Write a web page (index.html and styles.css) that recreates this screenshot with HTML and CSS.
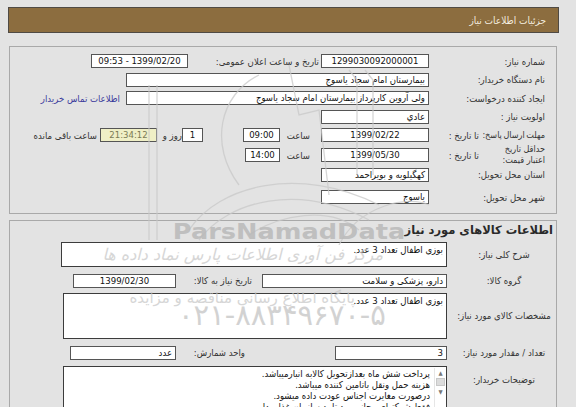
FILE: index.html
```html
<!DOCTYPE html>
<html lang="fa">
<head>
<meta charset="utf-8">
<title>جزئیات اطلاعات نیاز</title>
<link rel="stylesheet" href="styles.css">
</head>
<body>
<div class="page" dir="rtl">
  <div class="header">جزئیات اطلاعات نیاز</div>

  <div class="panel p1">
    <div class="row">
      <div class="lbl">شماره نیاز:</div>
      <div class="box w108 c">1299030092000001</div>
      <div class="txt w133">تاریخ و ساعت اعلان عمومی:</div>
      <div class="box w97 c">1399/02/20 - 09:53</div>
    </div>
    <div class="row">
      <div class="lbl">نام دستگاه خریدار:</div>
      <div class="box w303">بیمارستان امام سجاد یاسوج</div>
    </div>
    <div class="row">
      <div class="lbl">ایجاد کننده درخواست:</div>
      <div class="box w303">ولی آروین کارپرداز بیمارستان امام سجاد یاسوج</div>
      <div class="link">اطلاعات تماس خریدار</div>
    </div>
    <div class="row">
      <div class="lbl">اولویت نیاز :</div>
      <div class="box w108">عادي</div>
    </div>
    <div class="row">
      <div class="lbl-main">مهلت ارسال پاسخ:</div>
      <div class="lbl-sub">تا تاریخ :</div>
      <div class="box w108 c">1399/02/22</div>
      <div class="txt w41">ساعت</div>
      <div class="box w37 c">09:00</div>
      <div class="box w21 c gap40">1</div>
      <div class="txt w25">روز و</div>
      <div class="box w57 c remain">21:34:12</div>
      <div class="txt pr3">ساعت باقی مانده</div>
    </div>
    <div class="row tall">
      <div class="lbl-main two">حداقل تاریخ اعتبار قیمت:</div>
      <div class="lbl-sub">تا تاریخ :</div>
      <div class="box w108 c">1399/05/30</div>
      <div class="txt w41">ساعت</div>
      <div class="box w35 c">14:00</div>
    </div>
    <div class="row">
      <div class="lbl">استان محل تحویل:</div>
      <div class="box w108">کهگیلویه و بویراحمد</div>
    </div>
    <div class="row last">
      <div class="lbl">شهر محل تحویل:</div>
      <div class="box w108">یاسوج</div>
    </div>
  </div>

  <div class="panel p2">
    <div class="title">اطلاعات کالاهای مورد نیاز</div>
    <div class="row2 ra">
      <div class="lbl2">شرح کلی نیاز:</div>
      <div class="area h25 w386">بوزی اطفال تعداد 3 عدد.</div>
    </div>
    <div class="row2 rb">
      <div class="lbl2">گروه کالا:</div>
      <div class="box w185">دارو، پزشکی و سلامت</div>
      <div class="txt w86 pr10">تاریخ نیاز به کالا:</div>
      <div class="box w103 c">1399/02/30</div>
    </div>
    <div class="row2 rc">
      <div class="lbl2">مشخصات کالای مورد نیاز:</div>
      <div class="area h46 w384">بوزی اطفال تعداد 3 عدد.</div>
    </div>
    <div class="row2 rd">
      <div class="lbl2">تعداد / مقدار مورد نیاز:</div>
      <div class="box w112">3</div>
      <div class="txt w159 pr90">واحد شمارش:</div>
      <div class="box w106">عدد</div>
    </div>
    <div class="row2 re">
      <div class="lbl2">توضیحات خریدار:</div>
      <div class="area w384 notes">
        <div class="sbar">
          <span class="arr">&#9650;</span>
          <span class="thumb"></span>
          <span class="arr">&#9660;</span>
        </div>
        <div class="lines">
          <div>پرداخت شش ماه بعدازتحویل کالابه انبارمیباشد.</div>
          <div>هزینه حمل ونقل باتامین کننده میباشد.</div>
          <div>درصورت مغایرت اجناس عودت داده میشود.</div>
          <div>فقط شرکتهای مجاز مورد تایید سازمان غذا و دارو</div>
        </div>
      </div>
    </div>
  </div>

  <div class="wm" aria-hidden="true">
    <svg class="wm-logo" width="300" height="190" viewBox="0 0 300 190">
      <g fill="none" stroke="#c9c9c9" stroke-width="1.3">
        <line x1="20" y1="30" x2="20" y2="185"/>
        <line x1="28" y1="30" x2="28" y2="185"/>
        <path d="M60 175 C 90 130, 170 110, 250 150"/>
        <path d="M70 185 C 100 145, 170 128, 240 165"/>
        <path d="M130 20 C 90 40, 80 90, 110 130"/>
        <path d="M160 10 L 170 60 L 190 55 L 200 140"/>
        <path d="M220 15 L 228 25 L 228 120"/>
        <path d="M236 15 L 244 25 L 244 120"/>
        <path d="M210 190 C 230 150, 280 140, 300 150"/>
        <path d="M120 180 C 150 160, 200 150, 230 175"/>
      </g>
    </svg>
    <div class="wm-en">ParsNamadData</div>
    <div class="wm-fa1">مرکز فن آوری اطلاعات پارس نماد داده ها</div>
    <div class="wm-fa2">پایگاه اطلاع رسانی مناقصه و مزایده</div>
    <div class="wm-tel">۰۲۱-۸۸۳۴۹۶۷۰-۵</div>
  </div>
</div>
</body>
</html>
```

FILE: styles.css
```css
html, body {
  margin: 0;
  padding: 0;
  background: #e3e3e3;
}
body {
  font-family: "DejaVu Sans Condensed", "DejaVu Sans", "Liberation Sans", sans-serif;
  font-stretch: condensed;
  font-size: 9.5px;
  color: #333;
}
.page {
  position: relative;
  width: 551px;
  margin: 7px 0 0 8px;
}
.header {
  height: 24px;
  line-height: 26px;
  background: #8c6d3f;
  border: 1px solid #4f4a44;
  color: #f3ecdf;
  font-size: 10px;
  padding-right: 12px;
}
.panel {
  border: 1px solid #a9a9a9;
  margin: 0 2px 0 1px;
  background: #e3e3e3;
}
.p1 {
  margin-top: 13px;
  padding: 5px 11px 6px 0;
}
.row {
  display: flex;
  align-items: center;
  height: 18.5px;
}
.row.tall {
  height: 21px;
}
.row.last {
  margin-top: 4px;
}
.lbl {
  width: 116px;
  flex: none;
  white-space: nowrap;
}
.lbl-main {
  width: 61px;
  flex: none;
  white-space: nowrap;
  font-size: 9px;
  word-spacing: -1px;
}
.lbl-main.two {
  white-space: normal;
  line-height: 11px;
  word-spacing: 0;
}
.lbl-sub {
  width: 55px;
  flex: none;
  white-space: nowrap;
  padding-right: 5px;
  box-sizing: border-box;
}
.box {
  flex: none;
  box-sizing: border-box;
  height: 14px;
  line-height: 12px;
  background: #fff;
  border: 1px solid #555;
  padding: 0 3px;
  color: #111;
  white-space: nowrap;
  overflow: hidden;
}
.box.c { text-align: center; padding: 0; }
.remain {
  background: #efefc6;
  color: #7b7b55;
}
.txt {
  flex: none;
  white-space: nowrap;
  box-sizing: border-box;
}
.link {
  color: #3b3b9c;
  margin-right: 6px;
  white-space: nowrap;
}
.w21 { width: 21px; }
.w25 { width: 25px; }
.w35 { width: 35px; }
.w37 { width: 37px; }
.w41 { width: 41px; padding-right: 11px; }
.w57 { width: 57px; }
.w86 { width: 86px; }
.w97 { width: 97px; }
.w103 { width: 103px; }
.w106 { width: 106px; }
.w108 { width: 108px; }
.w112 { width: 112px; }
.w133 { width: 133px; padding-right: 2px; }
.w159 { width: 159px; }
.w185 { width: 185px; }
.w303 { width: 303px; }
.w384 { width: 384px; }
.w386 { width: 386px; }
.gap40 { margin-right: 40px; }
.pr3 { padding-right: 3px; }
.pr10 { padding-right: 10px; }
.pr90 { padding-right: 90px; }

.p2 {
  margin-top: 6px;
  padding: 0 3px 0 0;
  height: 200px;
}
.title {
  font-family: "DejaVu Sans", sans-serif;
  font-stretch: normal;
  font-weight: bold;
  font-size: 11.5px;
  color: #2a2a2a;
  height: 16px;
  line-height: 18px;
}
.row2 {
  display: flex;
  align-items: center;
}
.lbl2 {
  width: 98px;
  margin-left: 8px;
  flex: none;
  text-align: center;
  white-space: nowrap;
}
.ra { margin-top: 5px; }
.rb { margin-top: 7px; }
.rc { margin-top: 5px; }
.rd { margin-top: 7px; }
.re { margin-top: 6px; align-items: flex-start; }
.re .lbl2 { margin-top: 8px; }
.area {
  flex: none;
  box-sizing: border-box;
  background: #fff;
  border: 1px solid #3c3c3c;
  padding: 1px 3px;
  color: #111;
  line-height: 12px;
}
.h25 { height: 25px; }
.h46 { height: 46px; }
.notes {
  height: 50px;
  display: flex;
  padding: 1px 0 0 3px;
}
.sbar {
  width: 11px;
  flex: none;
  display: flex;
  flex-direction: column;
  align-items: center;
  border-left: 1px solid #e6e6e6;
}
.arr {
  font-size: 6px;
  line-height: 9px;
  color: #777;
}
.thumb {
  width: 9px;
  height: 8px;
  background: #dcdcdc;
  border: 1px solid #c8c8c8;
  box-sizing: border-box;
  margin: 1px 0;
}
.lines {
  padding-right: 4px;
  line-height: 11px;
}

.wm {
  position: absolute;
  left: 0;
  top: 0;
  width: 551px;
  height: 400px;
  pointer-events: none;
  font-family: "DejaVu Sans", sans-serif;
  font-stretch: normal;
}
.wm-logo {
  position: absolute;
  left: 121px;
  top: 48px;
  opacity: 0.75;
}
.wm-en {
  position: absolute;
  left: 131px;
  top: 215px;
  width: 300px;
  height: 21px;
  line-height: 21px;
  text-align: center;
  font-weight: bold;
  font-size: 21px;
  transform: scaleX(1.22);
  color: #b9b9b9;
  opacity: 0.85;
  white-space: nowrap;
}
.wm-fa1 {
  position: absolute;
  left: 135px;
  top: 238px;
  width: 240px;
  text-align: center;
  font-size: 16px;
  font-style: italic;
  color: #c6c6c6;
  opacity: 0.7;
  white-space: nowrap;
  direction: rtl;
}
.wm-fa2 {
  position: absolute;
  left: 132px;
  top: 282px;
  width: 215px;
  text-align: center;
  font-size: 15px;
  color: #c6c6c6;
  opacity: 0.7;
  white-space: nowrap;
  direction: rtl;
}
.wm-tel {
  position: absolute;
  left: 170px;
  top: 291px;
  width: 200px;
  text-align: center;
  font-size: 29px;
  color: #c4c4c4;
  opacity: 0.75;
  white-space: nowrap;
  direction: ltr;
}
```
